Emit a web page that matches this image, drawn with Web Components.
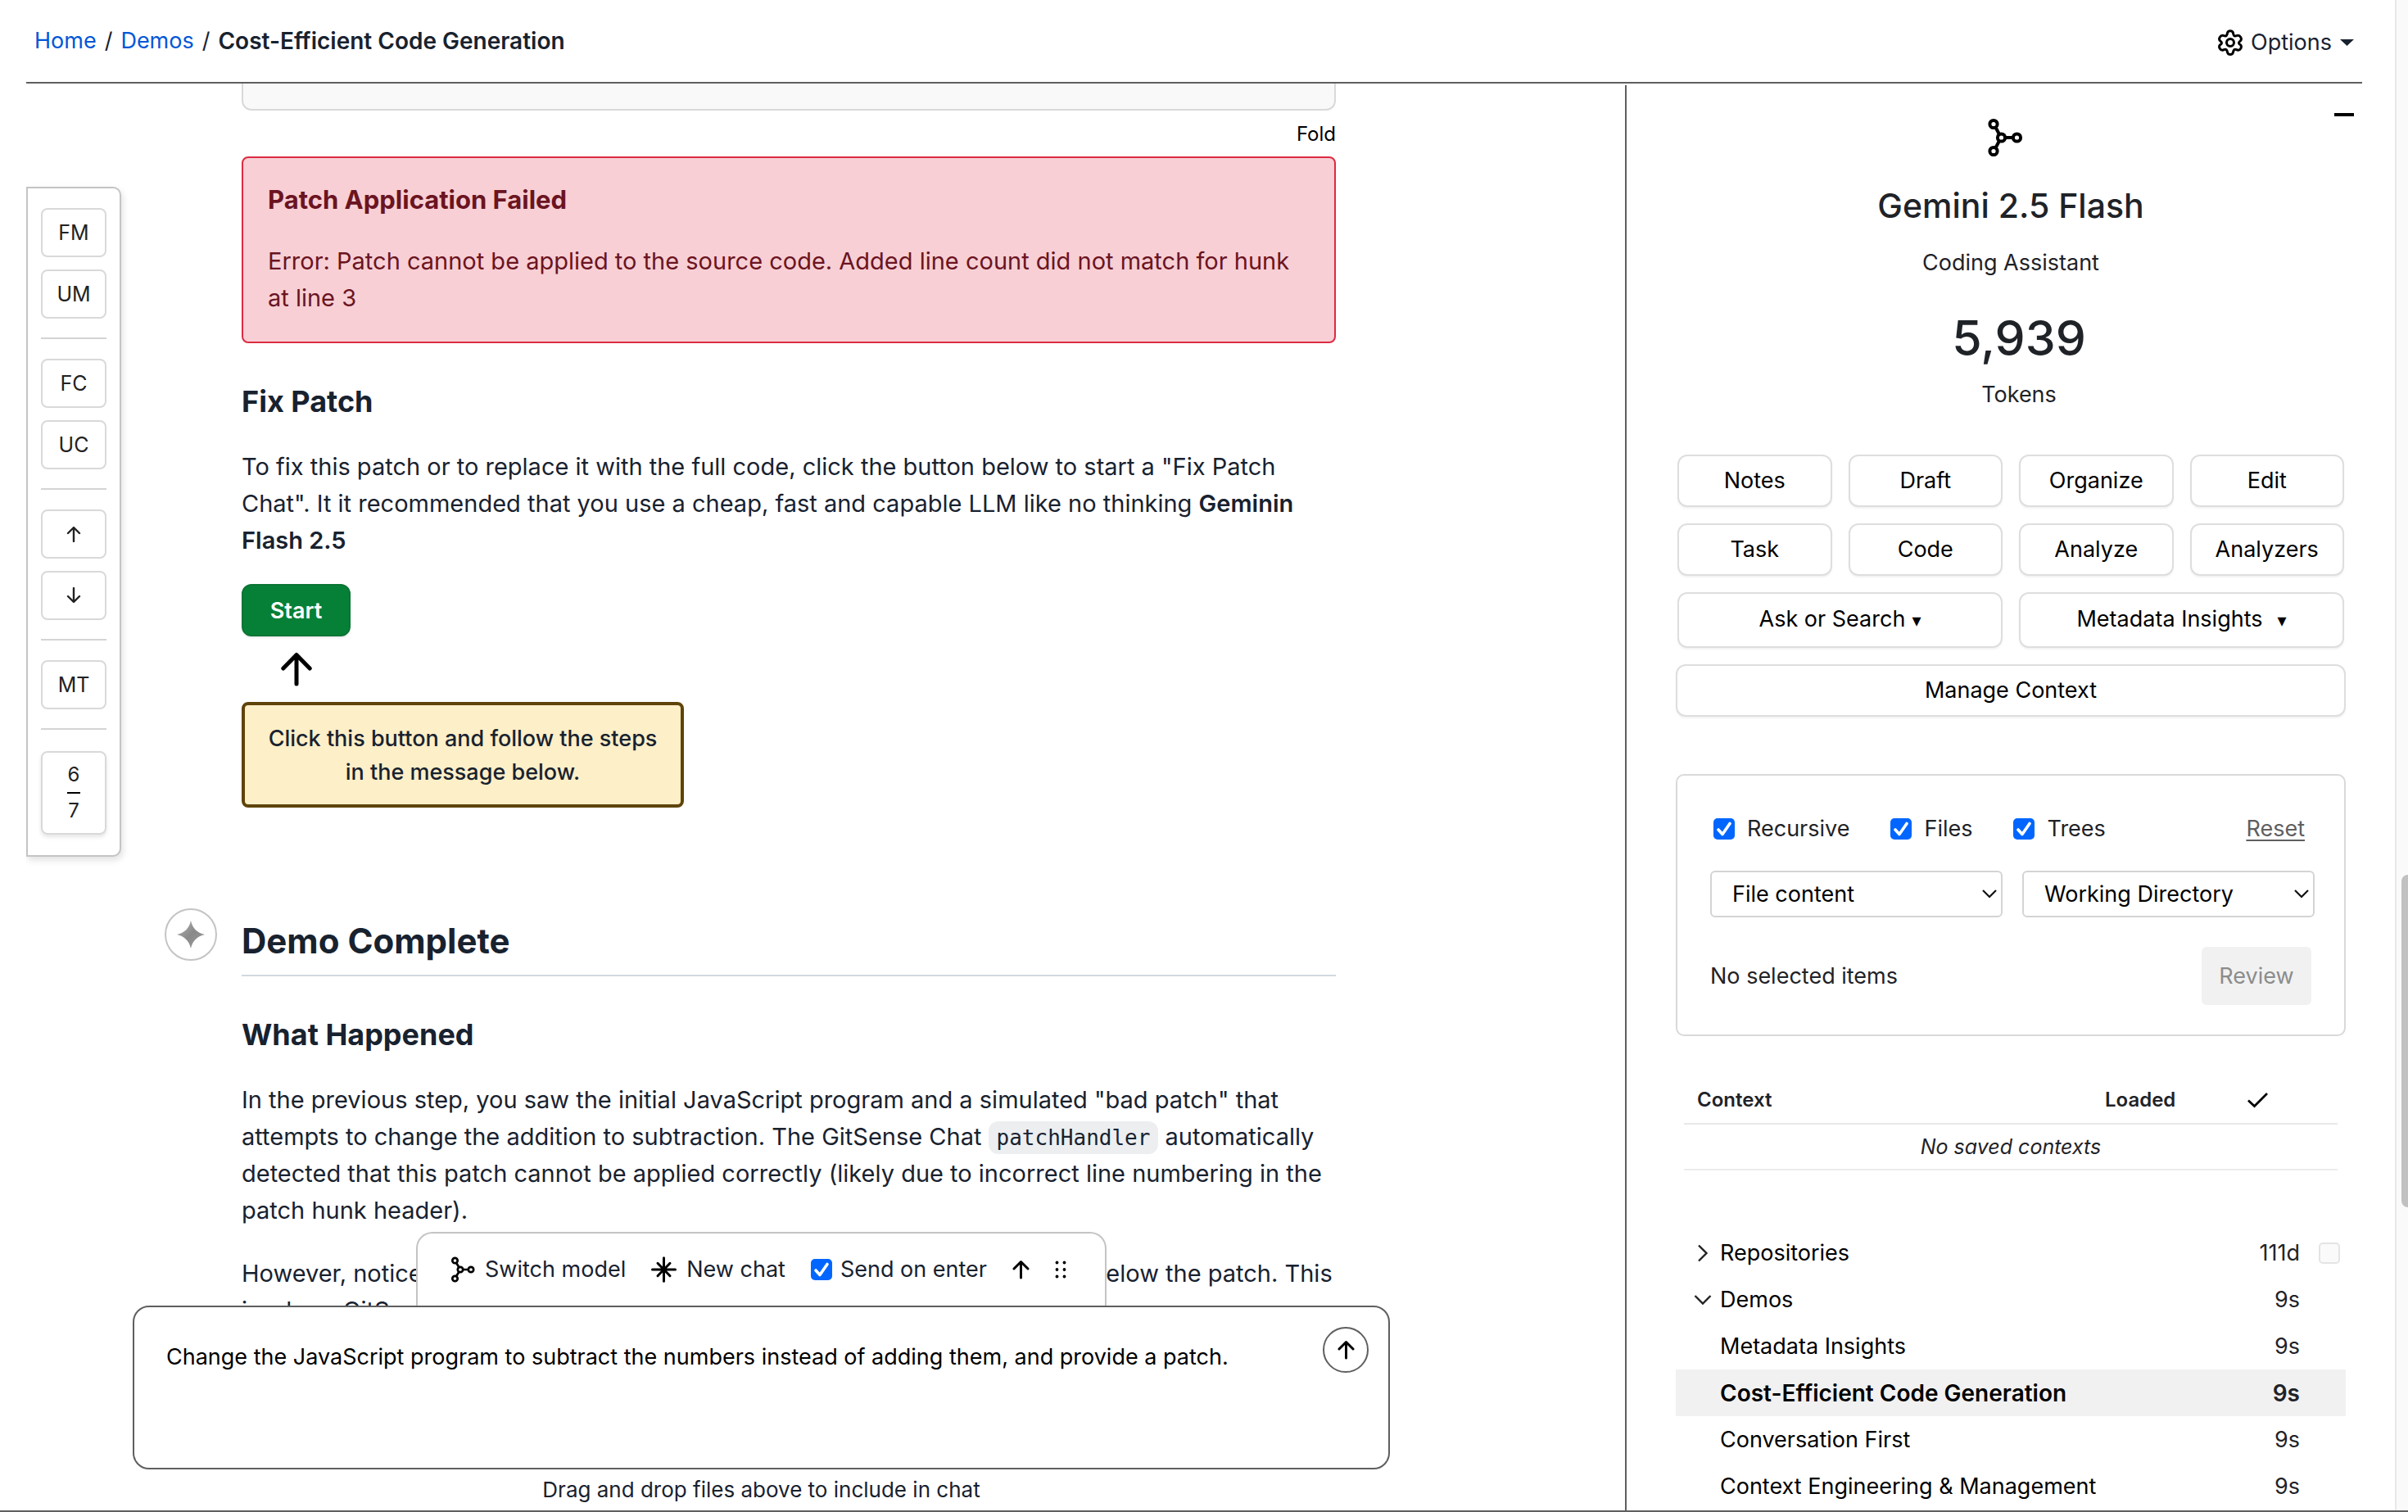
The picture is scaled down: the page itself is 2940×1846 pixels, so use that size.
<!DOCTYPE html>
<html lang="en">
<head>
<meta charset="utf-8">
<title>Cost-Efficient Code Generation</title>
<style>
  html, body { height: 100%; margin: 0; }
  body {
    --ink: #18222f;
    --ink-soft: #1f2328;
    --line-dark: #5f5f5f;
    --line: #d9d9d9;
    --link: #0057d8;
    background: #fff;
    color: var(--ink);
    font-family: Inter, "Liberation Sans", sans-serif;
    font-size: 27px;
    line-height: 40px;
    overflow: hidden;
  }
</style>
</head>
<body>
<chat-app></chat-app>

<script>
const define = (name, html) => {
  const template = document.createElement('template');
  template.innerHTML = html;
  customElements.define(name, class extends HTMLElement {
    constructor() {
      super();
      this.attachShadow({ mode: 'open' }).append(template.content.cloneNode(true));
    }
  });
};

/* ---------- icons ---------- */
const ICONS = {
  gear: [30, 32, '<g fill="none" stroke="#000" stroke-width="3" stroke-linejoin="round"><path d="M11.6 4.2C12.2 .9 17.8 .9 18.4 4.200L19 6.300C19.400 7.600 20.400 8.200 21.700 7.900L23.600 7.400C27 6.700 30 11.500 27.300 14L26.200 15C25.300 15.700 25.300 17 26.200 17.800L27.300 18.700C30 21.200 27 26 23.600 25L21.700 24.400C20.400 24.100 19.400 24.700 19 26L18.400 28C17.800 31.300 12.200 31.300 11.600 28L11 26C10.600 24.700 9.600 24.100 8.300 24.400L6.400 25C3 26 0 21.200 2.700 18.700L3.800 17.800C4.700 17 4.700 15.700 3.800 15L2.700 14C0 11.500 3 6.700 6.400 7.400L8.300 7.900C9.600 8.200 10.600 7.600 11 6.300Z"/><circle cx="15" cy="16" r="4.500"/></g>'],
  model: [60, 60, '<g fill="none" stroke="#000" stroke-width="4"><circle cx="9" cy="13.500" r="4.600"/><circle cx="18.500" cy="30" r="4.600"/><circle cx="37.500" cy="30" r="4.600"/><circle cx="9" cy="46.500" r="4.600"/><path d="M11.500 17.500L16 26M11.500 42.500L16 34M23 30H33"/></g>'],
  modelSmall: [30, 32, '<g fill="none" stroke="#000" stroke-width="2.700"><circle cx="5.500" cy="5" r="3.200"/><circle cx="12" cy="16" r="3.200"/><circle cx="25" cy="16" r="3.200"/><circle cx="5.500" cy="27" r="3.200"/><path d="M7.200 8L10.400 13.200M7.200 24L10.400 18.800M15 16H22"/></g>'],
  burst: [31, 32, '<g stroke="#000" stroke-width="3" stroke-linecap="round"><path d="M15.500 1.800V30.200M1.500 16H29.500M8 8.300L23 23.700M23 8.300L8 23.700"/></g>'],
  sparkle: [36, 36, '<defs><linearGradient id="g" x1="0" x2="1" y2="1"><stop offset="0" stop-color="#b4b4b4"/><stop offset=".5" stop-color="#8a8a8a"/><stop offset="1" stop-color="#9c9c9c"/></linearGradient></defs><path fill="url(#g)" d="M18 1C20 10 25.500 16 35 18C25.500 20 20 26 18 35C16 26 10.500 20 1 18C10.500 16 16 10 18 1Z"/>'],
  up: [21, 24, '<path d="M10.500 22V3M2 11L10.500 2.500L19 11" fill="none" stroke="#000" stroke-width="3" stroke-linecap="round" stroke-linejoin="round"/>'],
  upThin: [18, 20, '<path d="M9 19V2.500M2 9L9 2L16 9" fill="none" stroke="#222" stroke-width="2.400" stroke-linecap="round" stroke-linejoin="round"/>'],
  downThin: [18, 20, '<path d="M9 1V17.500M2 11L9 18L16 11" fill="none" stroke="#222" stroke-width="2.400" stroke-linecap="round" stroke-linejoin="round"/>'],
  upBig: [38, 42, '<path d="M19 39V4M2.800 20L19 3.500L35.200 20" fill="none" stroke="#000" stroke-width="5" stroke-linecap="round" stroke-linejoin="round"/>'],
  dots: [15, 22, '<g fill="#000"><circle cx="2.500" cy="2.500" r="1.900"/><circle cx="11.500" cy="2.500" r="1.900"/><circle cx="2.500" cy="11" r="1.900"/><circle cx="11.500" cy="11" r="1.900"/><circle cx="2.500" cy="19.500" r="1.900"/><circle cx="11.500" cy="19.500" r="1.900"/></g>'],
  caret: [17, 8, '<path d="M0 0H17L8.500 8Z" fill="#18222f"/>'],
  minus: [24, 4, '<path d="M0 2H24" stroke="#000" stroke-width="4"/>'],
  tick: [27, 20, '<path d="M2 10.500L9.500 17.500L25 2" fill="none" stroke="#000" stroke-width="2.800"/>'],
  chevronDown: [22, 14, '<path d="M1.500 2L11 11.500L20.500 2" fill="none" stroke="#222" stroke-width="2.400"/>'],
  chevronRight: [14, 22, '<path d="M2 1.500L11.500 11L2 20.500" fill="none" stroke="#222" stroke-width="2.400"/>'],
  select: [18, 11, '<path d="M1 1L9 9L17 1" fill="none" stroke="#111" stroke-width="2.200"/>'],
};
customElements.define('app-icon', class extends HTMLElement {
  connectedCallback() {
    const [w, h, body] = ICONS[this.getAttribute('name')];
    this.attachShadow({ mode: 'open' }).innerHTML =
      `<style>:host{display:inline-flex;flex:none}svg{display:block}</style>
       <svg width="${w}" height="${h}" viewBox="0 0 ${w} ${h}" aria-hidden="true">${body}</svg>`;
  }
});

/* ---------- small controls ---------- */
define('ui-button', `
<style>
  :host { display: block; min-width: 0; }
  button {
    box-sizing: border-box; width: 100%; height: var(--h, 64px); padding: 0;
    font: inherit; color: #000; background: #fff;
    border: 2px solid #dedede; border-radius: 12px;
    box-shadow: 0 2px 2px rgba(0,0,0,.05); white-space: nowrap;
  }
</style>
<button type="button"><slot></slot></button>`);

customElements.define('check-field', class extends HTMLElement {
  connectedCallback() {
    const empty = this.hasAttribute('empty');
    this.attachShadow({ mode: 'open' }).innerHTML = `
    <style>
      :host { display: inline-flex; }
      label { display: flex; align-items: center; gap: var(--gap, 15px); white-space: nowrap; }
      input {
        appearance: none; box-sizing: border-box; flex: none; width: 26px; height: 26px; margin: 0;
        border-radius: 5px; border: 2px solid #e4e4e4; background: #fafafa;
      }
      input:checked {
        border: 0;
        background: #06f url("data:image/svg+xml,%3Csvg xmlns='http://www.w3.org/2000/svg' viewBox='0 0 26 26'%3E%3Cpath d='M6 14L11 19.500L20 6.500' fill='none' stroke='white' stroke-width='3.600' stroke-linecap='round' stroke-linejoin='round'/%3E%3C/svg%3E");
      }
    </style>
    <label><input type="checkbox" ${empty ? 'disabled aria-label="Select"' : 'checked'}><slot></slot></label>`;
  }
});

customElements.define('select-field', class extends HTMLElement {
  connectedCallback() {
    this.attachShadow({ mode: 'open' }).innerHTML = `
    <style>
      :host { display: grid; align-items: center; min-width: 0; }
      select, app-icon { grid-area: 1 / 1; }
      select {
        appearance: none; box-sizing: border-box; width: 100%; height: 57px; padding: 0 40px 0 25px;
        font: inherit; color: #000; background: #fff; border: 2px solid #d4d4d4; border-radius: 6px;
      }
      app-icon { justify-self: end; margin-right: 7px; pointer-events: none; }
    </style>
    <select aria-label="${this.getAttribute('label')}"><option>${this.getAttribute('value')}</option></select>
    <app-icon name="select"></app-icon>`;
  }
});

/* ---------- header ---------- */
define('site-header', `
<style>
  :host {
    display: flex; align-items: center; justify-content: space-between; box-sizing: border-box;
    height: 102px; padding: 0 10px; border-bottom: 2px solid var(--line-dark);
  }
  nav { display: flex; gap: 10px; }
  a { color: var(--link); text-decoration: none; }
  strong { font-size: 28px; font-weight: 600; }
  button {
    display: flex; align-items: center; gap: 10px; padding: 4px 0 0; border: 0; background: none;
    font: inherit; color: inherit;
  }
</style>
<nav aria-label="Breadcrumb">
  <a href="#home">Home</a><span>/</span><a href="#demos">Demos</a><span>/</span><strong>Cost-Efficient Code Generation</strong>
</nav>
<button type="button"><app-icon name="gear"></app-icon>Options<app-icon name="caret"></app-icon></button>`);

/* ---------- floating jump rail ---------- */
define('jump-rail', `
<style>
  :host {
    display: flex; flex-direction: column; gap: 15px; box-sizing: border-box; width: 116px;
    padding: 24px 16px 25px; background: #fff; border: 2px solid #c4c4c4;
    border-radius: 0 10px 10px 0; box-shadow: 2px 4px 8px rgba(0,0,0,.12);
    font-size: 25px; line-height: 30px; color: #222;
  }
  button {
    display: flex; align-items: center; justify-content: center; height: 60px; padding: 0;
    border: 2px solid #d9d9d9; border-radius: 8px; background: #fff; font: inherit; color: inherit;
  }
  hr { width: 100%; height: 2px; margin: 8px 0 9px; border: 0; background: #d4d4d4; }
  .count {
    display: flex; flex-direction: column; align-items: center; justify-content: center; gap: 6px;
    height: 98px; margin-top: 2px; border: 2px solid #d9d9d9; border-radius: 8px;
    box-shadow: 0 3px 5px rgba(0,0,0,.1); font-size: 24px;
  }
  .count i { width: 16px; height: 2px; background: #000; }
</style>
<button type="button">FM</button>
<button type="button">UM</button>
<hr>
<button type="button">FC</button>
<button type="button">UC</button>
<hr>
<button type="button" aria-label="Previous"><app-icon name="upThin"></app-icon></button>
<button type="button" aria-label="Next"><app-icon name="downThin"></app-icon></button>
<hr>
<button type="button">MT</button>
<hr>
<div class="count"><span>6</span><i></i><span>7</span></div>`);

/* ---------- chat pieces ---------- */
define('error-alert', `
<style>
  :host {
    display: block; padding: 28px 30px 31px; border: 2px solid #dc2b42; border-radius: 8px;
    background: #f8cfd5; color: #6b1421;
  }
  h3 { margin: 0 0 30px; font-size: 31px; font-weight: 650; }
  p { margin: 0; }
</style>
<h3><slot name="title"></slot></h3>
<p><slot></slot></p>`);

define('chat-message', `
<style>
  :host { display: flex; gap: 30px; }
  .avatar {
    display: flex; align-items: center; justify-content: center; box-sizing: border-box; flex: none;
    width: 64px; height: 64px; border: 2px solid #c4c4c4; border-radius: 50%;
  }
  .body { flex: 1; min-width: 0; }
  :host([plain]) .avatar { visibility: hidden; }
</style>
<div class="avatar"><app-icon name="sparkle"></app-icon></div>
<div class="body"><slot></slot></div>`);

define('hint-callout', `
<style>
  :host { display: block; width: fit-content; }
  .arrow { display: flex; align-items: center; justify-content: center; width: 133px; height: 80px; }
  .box {
    box-sizing: border-box; max-width: 540px; padding: 20px 28px 19px; border: 4px solid #5f4409;
    border-radius: 8px; background: #fdefc8; font-size: 27px; line-height: 41px; font-weight: 500; text-align: center;
  }
</style>
<div class="arrow"><app-icon name="upBig"></app-icon></div>
<div class="box"><slot></slot></div>`);

define('chat-thread', `
<style>
  :host { display: block; font-size: 29px; line-height: 45px; }
  h2, h3, p { margin: 0; }
  h2 { margin-top: 12px; padding-bottom: 13px; border-bottom: 2px solid #d1d9e0; font-size: 42px; line-height: 56px; font-weight: 650; }
  h3 { margin: 49px 0 34px; font-size: 36px; font-weight: 650; }
  p + p { margin-top: 32px; }
  strong { font-weight: 600; }
  .code-tail { height: 31px; border: 2px solid #d9d9d9; border-top: 0; border-radius: 0 0 12px 12px; background: #f9f9f9; }
  .fold { display: flex; justify-content: flex-end; }
  .fold button { height: 56px; padding: 0; border: 0; background: none; font: inherit; font-size: 24px; color: #000; }
  .start {
    display: block; width: 133px; height: 64px; margin-top: 31px; padding: 0; border: 2px solid #0a7534; border-radius: 12px;
    background: #078037; box-shadow: 0 2px 2px rgba(0,0,0,.08); color: #fff; font: inherit; font-size: 27px; font-weight: 600;
  }
  code {
    padding: 5px 10px; border-radius: 12px; background: #eceef0;
    font-family: "DejaVu Sans Mono", monospace; font-size: 26px; line-height: 30px;
  }
  chat-message + chat-message { margin-top: 123px; }
</style>
<chat-message plain>
  <div class="code-tail"></div>
  <div class="fold"><button type="button">Fold</button></div>
  <error-alert><span slot="title">Patch Application Failed</span>Error: Patch cannot be applied to the source code. Added line count did not match for hunk at line 3</error-alert>
  <h3>Fix Patch</h3>
  <p>To fix this patch or to replace it with the full code, click the button below to start a "Fix Patch Chat". It it recommended that you use a cheap, fast and capable LLM like no thinking <strong>Geminin Flash 2.5</strong></p>
  <button class="start" type="button">Start</button>
  <hint-callout>Click this button and follow the steps in the message below.</hint-callout>
</chat-message>
<chat-message>
  <h2>Demo Complete</h2>
  <h3>What Happened</h3>
  <p>In the previous step, you saw the initial JavaScript program and a simulated "bad patch" that attempts to change the addition to subtraction. The GitSense Chat <code>patchHandler</code> automatically detected that this patch cannot be applied correctly (likely due to incorrect line numbering in the patch hunk header).</p>
  <p>However, notice that there is a "Fix Patch" message plus one "Start" button below the patch. This is where GitSense</p>
</chat-message>`);

define('prompt-composer', `
<style>
  :host { display: flex; flex-direction: column; align-items: center; }
  .tools {
    display: flex; align-items: center; gap: 31px; box-sizing: border-box; height: 90px; padding: 0 46px 0 40px;
    border: 2px solid #c4c4c4; border-bottom: 0; border-radius: 20px 20px 0 0; background: #fff;
  }
  .tools button {
    display: flex; align-items: center; gap: 12px; padding: 0; border: 0; background: none;
    font: inherit; color: inherit; white-space: nowrap;
  }
  check-field { --gap: 10px; }
  .box {
    display: flex; align-items: flex-start; box-sizing: border-box; width: 100%; height: 200px;
    border: 2px solid var(--line-dark); border-radius: 20px; background: #fff;
  }
  textarea {
    flex: 1; box-sizing: border-box; height: 100%; padding: 41px 0 0 39px; border: 0; border-radius: 20px;
    outline: 0; resize: none; background: none; font: inherit; color: #000;
  }
  .send {
    display: flex; align-items: center; justify-content: center; width: 56px; height: 56px; margin: 24px; padding: 0;
    border: 2px solid var(--line-dark); border-radius: 50%; background: #fff;
  }
  .note { align-self: stretch; background: #fff; font-size: 26px; line-height: 50px; text-align: center; }
</style>
<div class="tools">
  <button type="button"><app-icon name="modelSmall"></app-icon>Switch model</button>
  <button type="button"><app-icon name="burst"></app-icon>New chat</button>
  <check-field>Send on enter</check-field>
  <button type="button" aria-label="Scroll up"><app-icon name="up"></app-icon></button>
  <button type="button" aria-label="Move"><app-icon name="dots"></app-icon></button>
</div>
<div class="box">
  <textarea aria-label="Message">Change the JavaScript program to subtract the numbers instead of adding them, and provide a patch.</textarea>
  <button class="send" type="button" aria-label="Send"><app-icon name="up"></app-icon></button>
</div>
<div class="note">Drag and drop files above to include in chat</div>`);

/* ---------- side panel ---------- */
define('model-summary', `
<style>
  :host { display: flex; flex-direction: column; align-items: center; color: var(--ink-soft); }
  h1 { margin: 23px 0 20px; font-size: 41px; line-height: 60px; font-weight: 500; }
  .tokens { display: flex; flex-direction: column; align-items: center; gap: 13px; margin-top: 36px; padding-left: 20px; }
  .tokens b { font-size: 59px; line-height: 72px; font-weight: 500; }
</style>
<app-icon name="model"></app-icon>
<h1>Gemini 2.5 Flash</h1>
<div>Coding Assistant</div>
<div class="tokens"><b>5,939</b><span>Tokens</span></div>`);

define('action-grid', `
<style>
  :host { display: block; }
  .grid { display: grid; grid-template-columns: repeat(4, 1fr); gap: 20px; padding: 0 2px 20px; }
  .wide { grid-column: span 2; --h: 68px; }
  small { margin-left: 8px; font-size: 22px; font-family: "DejaVu Sans", sans-serif; }
  small.far { margin-left: 18px; }
</style>
<div class="grid">
  <ui-button>Notes</ui-button><ui-button>Draft</ui-button><ui-button>Organize</ui-button><ui-button>Edit</ui-button>
  <ui-button>Task</ui-button><ui-button>Code</ui-button><ui-button>Analyze</ui-button><ui-button>Analyzers</ui-button>
  <ui-button class="wide">Ask or Search<small>▾</small></ui-button>
  <ui-button class="wide">Metadata Insights<small class="far">▾</small></ui-button>
</div>
<ui-button>Manage Context</ui-button>`);

define('filter-panel', `
<style>
  :host {
    display: block; padding: 45px 36px 36px 40px; border: 2px solid var(--line); border-radius: 10px;
    color: var(--ink-soft);
  }
  .row { display: flex; align-items: center; }
  .checks { gap: 50px; padding: 0 12px 0 4px; }
  a { margin-left: auto; color: #5f5f5f; text-underline-offset: 4px; }
  .selects { display: grid; grid-template-columns: 1fr 1fr; gap: 24px; margin: 31px 0 36px; }
  .end { justify-content: space-between; padding-right: 4px; }
  .end button { width: 134px; height: 71px; padding: 0; border: 0; border-radius: 6px; background: #f1f1f1; color: #8c8c8c; font: inherit; }
</style>
<div class="row checks">
  <check-field>Recursive</check-field><check-field>Files</check-field><check-field>Trees</check-field>
  <a href="#reset">Reset</a>
</div>
<div class="selects">
  <select-field label="Source" value="File content"></select-field>
  <select-field label="Location" value="Working Directory"></select-field>
</div>
<div class="row end"><span>No selected items</span><button type="button" disabled>Review</button></div>`);

define('context-table', `
<style>
  :host { display: block; padding: 0 10px; color: var(--ink-soft); }
  table { width: 100%; border-spacing: 0; table-layout: fixed; }
  th { height: 36px; padding: 10px 16px; border-bottom: 2px solid #e8e8e8; font-size: 24px; line-height: 36px; font-weight: 600; text-align: left; }
  th app-icon { vertical-align: middle; }
  th:nth-child(2) { width: 141px; }
  th:nth-child(3) { width: 95px; line-height: 0; }
  td { padding: 7px 0; border-bottom: 2px solid #ececec; font-size: 25px; font-style: italic; text-align: center; }
</style>
<table>
  <thead><tr><th>Context</th><th>Loaded</th><th><app-icon name="tick"></app-icon></th></tr></thead>
  <tbody><tr><td colspan="3">No saved contexts</td></tr></tbody>
</table>`);

define('tree-row', `
<style>
  :host { display: flex; align-items: center; height: 57px; color: var(--ink-soft); }
  :host([current]) { background: #f1f1f1; font-size: 28px; font-weight: 600; }
  .lead { display: flex; justify-content: center; box-sizing: border-box; width: 54px; padding-left: 12px; }
  .name { flex: 1; color: #000; }
  .tail { display: flex; box-sizing: border-box; width: 56px; padding-left: 23px; }
</style>
<span class="lead"><slot name="lead"></slot></span>
<span class="name"><slot></slot></span>
<slot name="age"></slot>
<span class="tail"><slot name="tail"></slot></span>`);

define('side-panel', `
<style>
  :host {
    display: flex; flex-direction: column; box-sizing: border-box; position: relative; flex: none; width: 900px;
    margin-top: 2px; padding: 34px 20px 0 60px; border-left: 2px solid var(--line-dark); overflow: hidden;
  }
  .collapse { position: absolute; top: 26px; right: 10px; display: flex; padding: 8px 0; border: 0; background: none; }
  action-grid { margin-top: 53px; }
  filter-panel { margin-top: 70px; }
  context-table { margin-top: 50px; }
  nav { margin-top: 72px; }
</style>
<button class="collapse" type="button" aria-label="Collapse"><app-icon name="minus"></app-icon></button>
<model-summary></model-summary>
<action-grid></action-grid>
<filter-panel></filter-panel>
<context-table></context-table>
<nav aria-label="Chats">
  <tree-row><app-icon slot="lead" name="chevronRight"></app-icon>Repositories<span slot="age">111d</span><check-field slot="tail" empty></check-field></tree-row>
  <tree-row><app-icon slot="lead" name="chevronDown"></app-icon>Demos<span slot="age">9s</span></tree-row>
  <tree-row>Metadata Insights<span slot="age">9s</span></tree-row>
  <tree-row current>Cost-Efficient Code Generation<span slot="age">9s</span></tree-row>
  <tree-row>Conversation First<span slot="age">9s</span></tree-row>
  <tree-row>Context Engineering &amp; Management<span slot="age">9s</span></tree-row>
</nav>`);

/* ---------- page ---------- */
define('chat-app', `
<style>
  :host { display: flex; box-sizing: border-box; height: 100vh; border-bottom: 2px solid var(--line-dark); }
  .page { display: flex; flex-direction: column; flex: 1; min-width: 0; padding: 0 40px 0 32px; }
  .work { display: flex; flex: 1; min-height: 0; }
  main { position: relative; flex: 1; min-width: 0; overflow: hidden; padding: 0 353px 0 169px; }
  jump-rail { position: absolute; left: 0; top: 126px; }
  prompt-composer { position: absolute; left: 130px; right: 287px; bottom: 0; }
  .scroll { display: flex; flex-direction: column; align-items: flex-end; box-sizing: border-box; width: 16px; padding-top: 1068px; border-left: 2px solid #e8e8e8; background: #fafafa; }
  .thumb { width: 8px; height: 406px; border-radius: 8px 0 0 8px; background: #c1c1c1; }
</style>
<div class="page">
  <site-header></site-header>
  <div class="work">
    <main>
      <chat-thread></chat-thread>
      <jump-rail></jump-rail>
      <prompt-composer></prompt-composer>
    </main>
    <side-panel></side-panel>
  </div>
</div>
<div class="scroll"><div class="thumb"></div></div>`);
</script>
</body>
</html>
